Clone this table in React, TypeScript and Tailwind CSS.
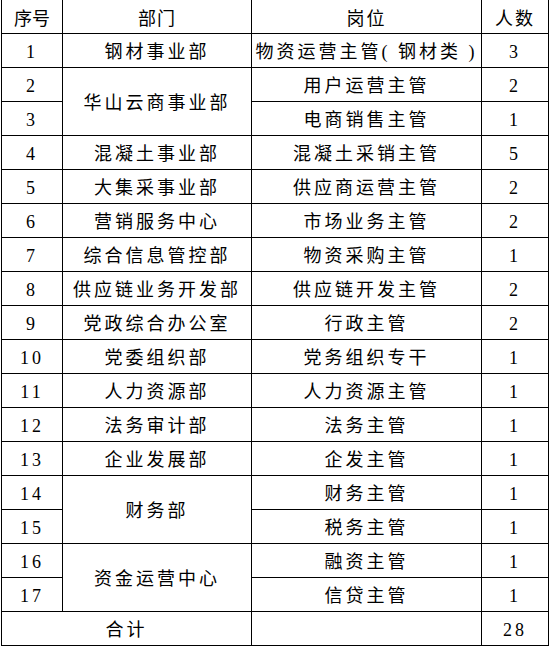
const rows: Array<{ no: string; dept?: string; span?: number; post: string; count: string }> = [
  { no: '1', dept: '钢材事业部', post: '物资运营主管( 钢材类 )', count: '3' },
  { no: '2', dept: '华山云商事业部', span: 2, post: '用户运营主管', count: '2' },
  { no: '3', post: '电商销售主管', count: '1' },
  { no: '4', dept: '混凝土事业部', post: '混凝土采销主管', count: '5' },
  { no: '5', dept: '大集采事业部', post: '供应商运营主管', count: '2' },
  { no: '6', dept: '营销服务中心', post: '市场业务主管', count: '2' },
  { no: '7', dept: '综合信息管控部', post: '物资采购主管', count: '1' },
  { no: '8', dept: '供应链业务开发部', post: '供应链开发主管', count: '2' },
  { no: '9', dept: '党政综合办公室', post: '行政主管', count: '2' },
  { no: '10', dept: '党委组织部', post: '党务组织专干', count: '1' },
  { no: '11', dept: '人力资源部', post: '人力资源主管', count: '1' },
  { no: '12', dept: '法务审计部', post: '法务主管', count: '1' },
  { no: '13', dept: '企业发展部', post: '企发主管', count: '1' },
  { no: '14', dept: '财务部', span: 2, post: '财务主管', count: '1' },
  { no: '15', post: '税务主管', count: '1' },
  { no: '16', dept: '资金运营中心', span: 2, post: '融资主管', count: '1' },
  { no: '17', post: '信贷主管', count: '1' },
];

const cell = 'border border-black px-0 pb-0 pt-[4px] text-center align-middle whitespace-nowrap';

export default function App() {
  return (
    <div className="min-h-[648px] w-[551px] bg-white pl-px text-black font-['Liberation_Serif','Noto_Sans_CJK_SC',serif] text-[18px] leading-none">
      <table className="w-[547px] table-fixed border-collapse">
        <colgroup>
          <col className="w-[61px]" />
          <col className="w-[189px]" />
          <col className="w-[230px]" />
          <col className="w-[67px]" />
        </colgroup>
        <thead>
          <tr className="h-[33px]">
            <th className={`${cell} border-t-0 pt-[6px] font-normal`}>序号</th>
            <th className={`${cell} border-t-0 pt-[6px] font-normal tracking-[1px]`}>部门</th>
            <th className={`${cell} border-t-0 pt-[6px] font-normal tracking-[2px]`}>岗位</th>
            <th className={`${cell} border-t-0 pt-[6px] font-normal tracking-[2px]`}>人数</th>
          </tr>
        </thead>
        <tbody className="tracking-[3px]">
          {rows.map((r) => (
            <tr key={r.no} className="h-[34px]">
              <td className={cell}>{r.no}</td>
              {r.dept ? (
                <td className={cell} rowSpan={r.span ?? 1}>
                  {r.dept}
                </td>
              ) : null}
              <td className={cell}>{r.post}</td>
              <td className={cell}>{r.count}</td>
            </tr>
          ))}
          <tr className="h-[34px]">
            <td className={cell} colSpan={2}>
              合计
            </td>
            <td className={cell}></td>
            <td className={cell}>28</td>
          </tr>
        </tbody>
      </table>
    </div>
  );
}
